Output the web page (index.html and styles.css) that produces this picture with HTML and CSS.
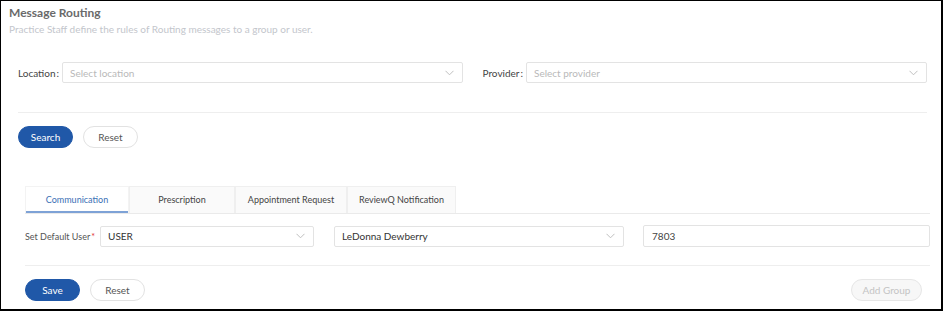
FILE: index.html
```html
<!DOCTYPE html>
<html lang="en">
<head>
    <meta charset="UTF-8">
    <meta name="viewport" content="width=device-width, initial-scale=1.0">
    <title>Message Routing</title>
    <link rel="stylesheet" href="styles.css">
</head>
<body>
    <div class="frame">
        <h1>Message Routing</h1>
        <p class="subtitle">Practice Staff define the rules of Routing messages to a group or user.</p>

        <div class="filters">
            <div class="field">
                <label>Location<span class="colon">:</span></label>
                <div class="select placeholder">
                    <span>Select location</span>
                    <svg class="chevron" width="9" height="6" viewBox="0 0 9 6"><path d="M0.5 0.8 L4.5 4.8 L8.5 0.8" fill="none" stroke="#bfbfbf" stroke-width="1"/></svg>
                </div>
            </div>
            <div class="field">
                <label>Provider<span class="colon">:</span></label>
                <div class="select placeholder">
                    <span>Select provider</span>
                    <svg class="chevron" width="9" height="6" viewBox="0 0 9 6"><path d="M0.5 0.8 L4.5 4.8 L8.5 0.8" fill="none" stroke="#bfbfbf" stroke-width="1"/></svg>
                </div>
            </div>
        </div>

        <div class="search-area">
            <div class="buttons">
                <button class="btn primary">Search</button>
                <button class="btn">Reset</button>
            </div>
        </div>

        <div class="routing">
            <div class="tabs">
                <div class="tab active">Communication</div>
                <div class="tab">Prescription</div>
                <div class="tab">Appointment Request</div>
                <div class="tab">ReviewQ Notification</div>
            </div>

            <div class="default-row">
                <label>Set Default User<span class="req">*</span></label>
                <div class="select type">
                    <span>USER</span>
                    <svg class="chevron" width="9" height="6" viewBox="0 0 9 6"><path d="M0.5 0.8 L4.5 4.8 L8.5 0.8" fill="none" stroke="#bfbfbf" stroke-width="1"/></svg>
                </div>
                <div class="select user">
                    <span>LeDonna Dewberry</span>
                    <svg class="chevron" width="9" height="6" viewBox="0 0 9 6"><path d="M0.5 0.8 L4.5 4.8 L8.5 0.8" fill="none" stroke="#bfbfbf" stroke-width="1"/></svg>
                </div>
                <div class="textbox">7803</div>
            </div>

            <div class="footer">
                <div class="buttons">
                    <button class="btn primary">Save</button>
                    <button class="btn">Reset</button>
                </div>
                <button class="btn disabled">Add Group</button>
            </div>
        </div>
    </div>
</body>
</html>
```

FILE: styles.css
```css
body {
    margin: 0;
    font-family: Lato, "Open Sans", sans-serif;
    background-color: #fff;
}

.frame {
    width: 943px;
    height: 311px;
    box-sizing: border-box;
    border: 1px solid #000;
    border-right-width: 2px;
    border-bottom-width: 2px;
    padding: 2px 14px 0 8px;
    overflow: hidden;
}

h1 {
    margin: 0;
    font-size: 12px;
    font-weight: 700;
    color: #6a6a6a;
    line-height: 19px;
}

.subtitle {
    margin: 0;
    font-size: 10px;
    color: #c3c6cc;
    line-height: 15px;
}

.filters {
    display: flex;
    gap: 20px;
    margin-top: 25px;
    padding-left: 9px;
}

.field {
    display: flex;
    align-items: center;
    flex: 1;
}

.field label {
    font-size: 10px;
    color: #444;
    margin-right: 3px;
    white-space: nowrap;
}

.colon {
    margin-left: 1px;
}

.select {
    display: flex;
    align-items: center;
    justify-content: space-between;
    height: 21px;
    box-sizing: border-box;
    border: 1px solid #e3e3e3;
    border-radius: 2px;
    padding: 0 8px 0 7px;
    font-size: 10px;
    color: #333;
    background-color: #fff;
}

.field .select {
    flex: 1;
}

.select.placeholder {
    color: #b9b9b9;
}

.search-area {
    margin: 29px 0 0 9px;
    border-top: 1px solid #eeeeee;
    padding-top: 13px;
}

.buttons {
    display: flex;
    gap: 10px;
}

.btn {
    font-family: inherit;
    font-size: 10px;
    height: 22px;
    width: 55px;
    border-radius: 11px;
    border: 1px solid #e2e2e2;
    background-color: #fff;
    color: #555;
    padding: 0;
    cursor: pointer;
}

.btn.primary {
    background-color: #2058a8;
    border-color: #2058a8;
    color: #fff;
}

.btn.disabled {
    width: 71px;
    background-color: #f7f7f7;
    border-color: #e6e6e6;
    color: #c4c4c4;
}

.routing {
    margin: 38px -3px 0 16px;
}

.tabs {
    display: flex;
    border-bottom: 1px solid #eaeaea;
}

.tab {
    height: 26px;
    line-height: 26px;
    font-size: 9px;
    color: #444;
    text-align: center;
    background-color: #fafafa;
    border: 1px solid #efefef;
    border-bottom: none;
}

.tab:nth-child(1) { width: 102px; }
.tab:nth-child(2) { width: 104px; }
.tab:nth-child(3) { width: 110px; }
.tab:nth-child(4) { width: 107px; }

.tab.active {
    color: #3a6fb5;
    background-color: #fff;
    border-color: #f3f3f3;
    box-shadow: inset 0 -2px 0 #7ea2d6;
}

.default-row {
    display: flex;
    align-items: center;
    margin-top: 11px;
}

.default-row label {
    font-size: 9px;
    color: #555;
    margin-right: 5px;
}

.req {
    color: #e03434;
    margin-left: 1px;
}

.select.type {
    width: 214px;
    margin-right: 20px;
}

.select.user {
    width: 290px;
    margin-right: 19px;
}

.textbox {
    flex: 1;
    height: 22px;
    box-sizing: border-box;
    border: 1px solid #e3e3e3;
    border-radius: 2px;
    padding: 0 8px;
    font-size: 10px;
    color: #444;
    line-height: 20px;
}

.footer {
    display: flex;
    justify-content: space-between;
    align-items: center;
    margin-top: 18px;
    border-top: 1px solid #eeeeee;
    padding: 13px 8px 0 0;
}
```
